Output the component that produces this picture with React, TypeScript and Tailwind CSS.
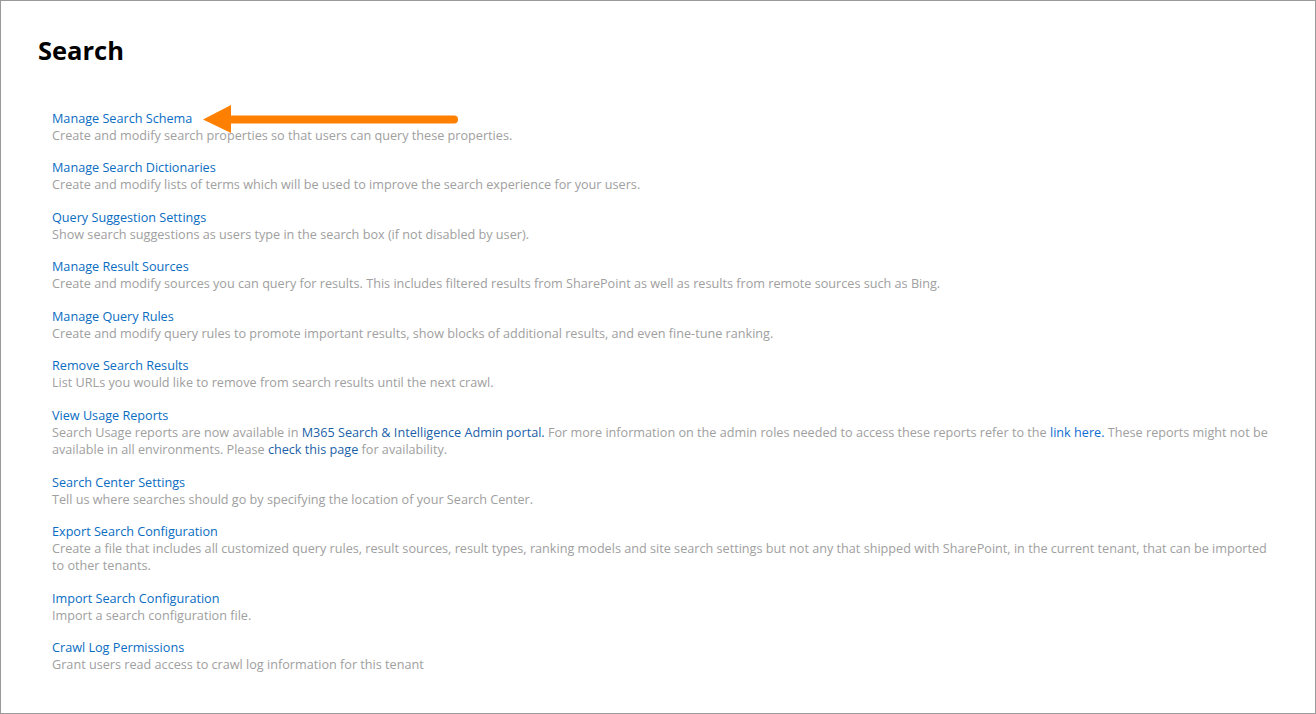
import React from 'react';

type Item = { title: string; desc: React.ReactNode };

const A = ({ children }: { children: React.ReactNode }) => (
  <a href="#" className="text-[#1b5fa8]">
    {children}
  </a>
);

const ITEMS: Item[] = [
  {
    title: 'Manage Search Schema',
    desc: 'Create and modify search properties so that users can query these properties.',
  },
  {
    title: 'Manage Search Dictionaries',
    desc: 'Create and modify lists of terms which will be used to improve the search experience for your users.',
  },
  {
    title: 'Query Suggestion Settings',
    desc: 'Show search suggestions as users type in the search box (if not disabled by user).',
  },
  {
    title: 'Manage Result Sources',
    desc: 'Create and modify sources you can query for results. This includes filtered results from SharePoint as well as results from remote sources such as Bing.',
  },
  {
    title: 'Manage Query Rules',
    desc: 'Create and modify query rules to promote important results, show blocks of additional results, and even fine-tune ranking.',
  },
  {
    title: 'Remove Search Results',
    desc: 'List URLs you would like to remove from search results until the next crawl.',
  },
  {
    title: 'View Usage Reports',
    desc: (
      <>
        Search Usage reports are now available in <A>M365 Search &amp; Intelligence Admin portal.</A> For more
        information on the admin roles needed to access these reports refer to the{' '}
        <a href="#" className="text-[#0f6cd0]">
          link here.
        </a>{' '}
        These reports might not be available in all environments. Please <A>check this page</A> for availability.
      </>
    ),
  },
  {
    title: 'Search Center Settings',
    desc: 'Tell us where searches should go by specifying the location of your Search Center.',
  },
  {
    title: 'Export Search Configuration',
    desc: 'Create a file that includes all customized query rules, result sources, result types, ranking models and site search settings but not any that shipped with SharePoint, in the current tenant, that can be imported to other tenants.',
  },
  {
    title: 'Import Search Configuration',
    desc: 'Import a search configuration file.',
  },
  {
    title: 'Crawl Log Permissions',
    desc: 'Grant users read access to crawl log information for this tenant',
  },
];

function Arrow() {
  return (
    <svg className="absolute left-[200px] top-[102px]" width="258" height="32" viewBox="0 0 258 32" aria-hidden="true">
      <line x1="28" y1="16.5" x2="253" y2="16.5" stroke="#ff8000" strokeWidth="8" strokeLinecap="round" />
      <polygon points="2,16.5 30,2 30,30" fill="#ff8000" />
    </svg>
  );
}

export default function App() {
  return (
    <div className="relative w-[1316px] h-[714px] bg-white border border-[#9a9a9a] font-['Open_Sans',sans-serif] overflow-hidden">
      <div className="pl-[37px] pt-[33px] pr-[39px]">
        <h1 className="text-[25.5px] leading-[32px] font-bold text-black">Search</h1>
        <ul className="mt-[42.5px] pl-[14px]">
          {ITEMS.map((item) => (
            <li key={item.title} className="mb-[14.6px]">
              <a href="#" className="block text-[12.65px] leading-[18px] text-[#0a6dc2]">
                {item.title}
              </a>
              <p className="text-[12.65px] leading-[17px] text-[#a0a0a0]">{item.desc}</p>
            </li>
          ))}
        </ul>
      </div>
      <Arrow />
    </div>
  );
}
